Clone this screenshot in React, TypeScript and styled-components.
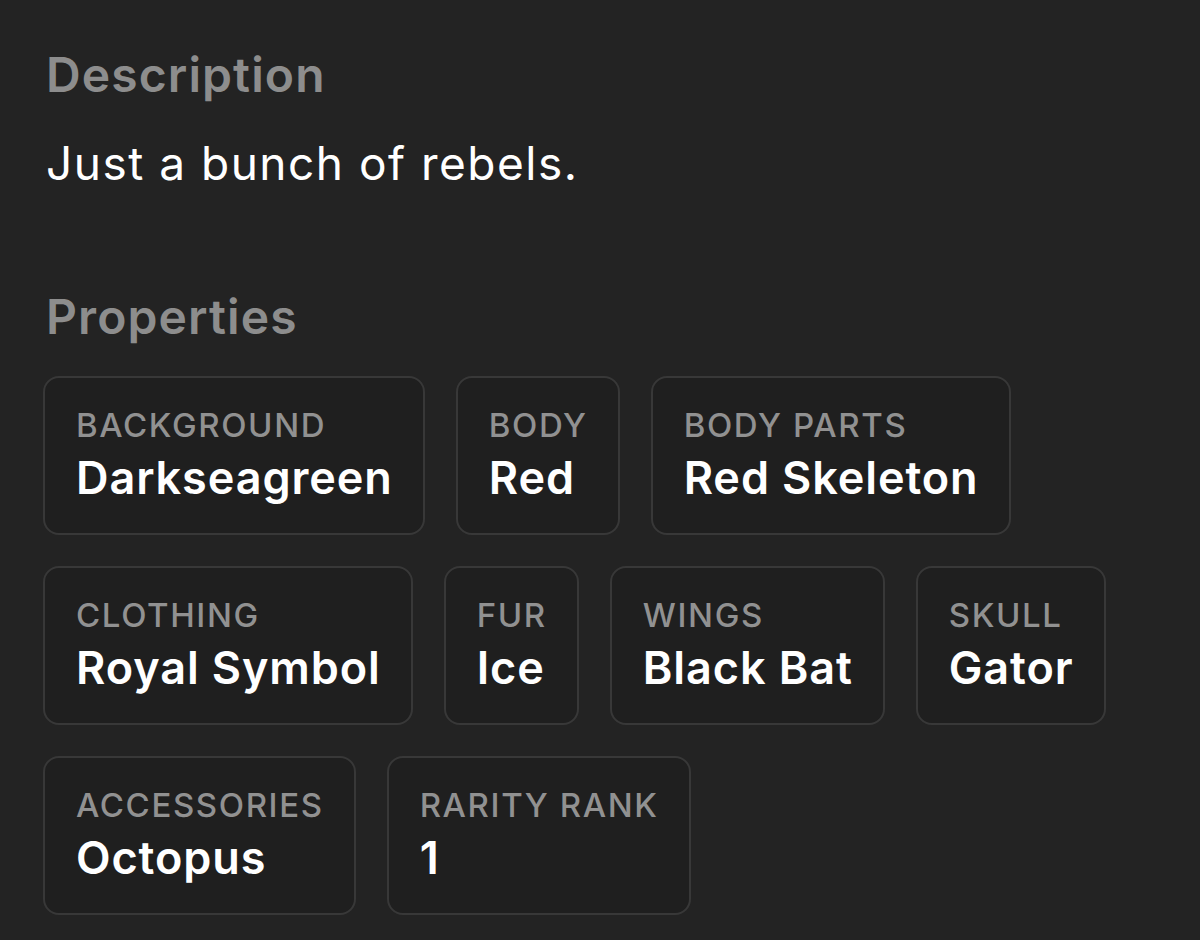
import styled, { createGlobalStyle } from 'styled-components'

// trait list shown under "Properties", one row per line in the screenshot
const rows: { label: string; value: string }[][] = [
    [
        { label: 'Background', value: 'Darkseagreen' },
        { label: 'Body', value: 'Red' },
        { label: 'Body Parts', value: 'Red Skeleton' },
    ],
    [
        { label: 'Clothing', value: 'Royal Symbol' },
        { label: 'Fur', value: 'Ice' },
        { label: 'Wings', value: 'Black Bat' },
        { label: 'Skull', value: 'Gator' },
    ],
    [
        { label: 'Accessories', value: 'Octopus' },
        { label: 'Rarity Rank', value: '1' },
    ],
]

const App = () => {
    return (
        <>
            <GlobalStyle />
            <Page>
                <Heading>Description</Heading>
                <Description>Just a bunch of rebels.</Description>
                <Heading $spaced>Properties</Heading>
                <PropertyRows>
                    {rows.map((row, i) => (
                        <PropertyRow key={i}>
                            {row.map((p) => (
                                <PropertyCard key={p.label}>
                                    <PropertyLabel>{p.label}</PropertyLabel>
                                    <PropertyValue>{p.value}</PropertyValue>
                                </PropertyCard>
                            ))}
                        </PropertyRow>
                    ))}
                </PropertyRows>
            </Page>
        </>
    )
}

export default App

const GlobalStyle = createGlobalStyle`
    html, body {
        margin: 0;
        padding: 0;
        background: #232323;
    }
    body {
        font-family: Inter, "Noto Sans", "DejaVu Sans", sans-serif;
        -webkit-font-smoothing: antialiased;
    }
`

const Page = styled.div`
    min-height: 940px;
    box-sizing: border-box;
    padding: 46px 0 0 46px;
    background: #232323;
    display: flex;
    flex-direction: column;
`

const Heading = styled.div<{ $spaced?: boolean }>`
    font-size: 48px;
    line-height: 58px;
    font-weight: 600;
    letter-spacing: 1.1px;
    color: #8d8d8d;
    margin-top: ${(p) => (p.$spaced ? '97px' : '0')};
`

const Description = styled.div`
    font-size: 46px;
    line-height: 56px;
    font-weight: 400;
    letter-spacing: 1.5px;
    color: #ffffff;
    margin-top: 31px;
`

const PropertyRows = styled.div`
    margin-top: 30px;
    display: flex;
    flex-direction: column;
    gap: 31px;
`

const PropertyRow = styled.div`
    display: flex;
    gap: 31px;
    margin-left: -3px;
`

const PropertyCard = styled.div`
    box-sizing: border-box;
    height: 159px;
    padding: 27px 30px 28px 31px;
    border: 2px solid #383838;
    border-radius: 16px;
    background: #1f1f1f;
    display: flex;
    flex-direction: column;
    gap: 6px;
`

const PropertyLabel = styled.div`
    font-size: 33px;
    line-height: 40px;
    font-weight: 500;
    letter-spacing: 1.6px;
    color: #919191;
    text-transform: uppercase;
    white-space: nowrap;
`

const PropertyValue = styled.div`
    font-size: 45px;
    line-height: 54px;
    font-weight: 600;
    letter-spacing: 0.9px;
    color: #ffffff;
    white-space: nowrap;
`
